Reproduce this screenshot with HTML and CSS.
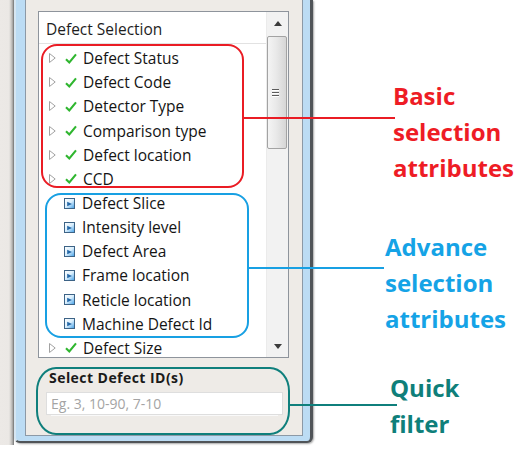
FILE: index.html
```html
<!DOCTYPE html>
<html>
<head>
<meta charset="utf-8">
<link rel="stylesheet" href="styles.css">
</head>
<body>
<div class="stage">
  <div class="backdrop"></div>
  <div class="window">
    <div class="client">
      <div class="tree">
        <div class="list">
          <div class="header">Defect Selection</div>
          <div class="rows">
            <div class="row"><svg class="exp" viewBox="0 0 7 10"><polygon points="0.5,0.5 6.2,5 0.5,9.5"/></svg><svg class="check" viewBox="0 0 12 11"><path d="M1 6.2 L4.3 9.4 L11 1.3"/></svg><span class="label">Defect Status</span></div>
            <div class="row"><svg class="exp" viewBox="0 0 7 10"><polygon points="0.5,0.5 6.2,5 0.5,9.5"/></svg><svg class="check" viewBox="0 0 12 11"><path d="M1 6.2 L4.3 9.4 L11 1.3"/></svg><span class="label">Defect Code</span></div>
            <div class="row"><svg class="exp" viewBox="0 0 7 10"><polygon points="0.5,0.5 6.2,5 0.5,9.5"/></svg><svg class="check" viewBox="0 0 12 11"><path d="M1 6.2 L4.3 9.4 L11 1.3"/></svg><span class="label">Detector Type</span></div>
            <div class="row"><svg class="exp" viewBox="0 0 7 10"><polygon points="0.5,0.5 6.2,5 0.5,9.5"/></svg><svg class="check" viewBox="0 0 12 11"><path d="M1 6.2 L4.3 9.4 L11 1.3"/></svg><span class="label">Comparison type</span></div>
            <div class="row"><svg class="exp" viewBox="0 0 7 10"><polygon points="0.5,0.5 6.2,5 0.5,9.5"/></svg><svg class="check" viewBox="0 0 12 11"><path d="M1 6.2 L4.3 9.4 L11 1.3"/></svg><span class="label">Defect location</span></div>
            <div class="row"><svg class="exp" viewBox="0 0 7 10"><polygon points="0.5,0.5 6.2,5 0.5,9.5"/></svg><svg class="check" viewBox="0 0 12 11"><path d="M1 6.2 L4.3 9.4 L11 1.3"/></svg><span class="label">CCD</span></div>
            <div class="row"><span class="exp"></span><svg class="adv" viewBox="0 0 11 11"><defs><linearGradient id="g" x1="0" y1="0" x2="1" y2="1"><stop offset="0" stop-color="#ffffff"/><stop offset="0.5" stop-color="#d9eefc"/><stop offset="1" stop-color="#3b9be6"/></linearGradient></defs><rect x="0.5" y="0.5" width="10" height="10" fill="url(#g)" stroke="#3d6386"/><path d="M3.2 3.8 L8 6 L3.2 8.2 Z" fill="#2468a8"/></svg><span class="label">Defect Slice</span></div>
            <div class="row"><span class="exp"></span><svg class="adv" viewBox="0 0 11 11"><rect x="0.5" y="0.5" width="10" height="10" fill="url(#g)" stroke="#3d6386"/><path d="M3.2 3.8 L8 6 L3.2 8.2 Z" fill="#2468a8"/></svg><span class="label">Intensity level</span></div>
            <div class="row"><span class="exp"></span><svg class="adv" viewBox="0 0 11 11"><rect x="0.5" y="0.5" width="10" height="10" fill="url(#g)" stroke="#3d6386"/><path d="M3.2 3.8 L8 6 L3.2 8.2 Z" fill="#2468a8"/></svg><span class="label">Defect Area</span></div>
            <div class="row"><span class="exp"></span><svg class="adv" viewBox="0 0 11 11"><rect x="0.5" y="0.5" width="10" height="10" fill="url(#g)" stroke="#3d6386"/><path d="M3.2 3.8 L8 6 L3.2 8.2 Z" fill="#2468a8"/></svg><span class="label">Frame location</span></div>
            <div class="row"><span class="exp"></span><svg class="adv" viewBox="0 0 11 11"><rect x="0.5" y="0.5" width="10" height="10" fill="url(#g)" stroke="#3d6386"/><path d="M3.2 3.8 L8 6 L3.2 8.2 Z" fill="#2468a8"/></svg><span class="label">Reticle location</span></div>
            <div class="row"><span class="exp"></span><svg class="adv" viewBox="0 0 11 11"><rect x="0.5" y="0.5" width="10" height="10" fill="url(#g)" stroke="#3d6386"/><path d="M3.2 3.8 L8 6 L3.2 8.2 Z" fill="#2468a8"/></svg><span class="label">Machine Defect Id</span></div>
            <div class="row"><svg class="exp" viewBox="0 0 7 10"><polygon points="0.5,0.5 6.2,5 0.5,9.5"/></svg><svg class="check" viewBox="0 0 12 11"><path d="M1 6.2 L4.3 9.4 L11 1.3"/></svg><span class="label">Defect Size</span></div>
          </div>
        </div>
        <div class="scrollbar">
          <div class="sb-btn"><svg class="arrow" viewBox="0 0 8 5"><polygon points="0,5 4,0 8,5"/></svg></div>
          <div class="sb-track">
            <div class="thumb"><span class="grip"></span><span class="grip"></span><span class="grip"></span></div>
          </div>
          <div class="sb-btn"><svg class="arrow" viewBox="0 0 8 5"><polygon points="0,0 8,0 4,5"/></svg></div>
        </div>
      </div>
      <div class="quick">
        <div class="quick-label">Select Defect ID(s)</div>
        <div class="quick-input">Eg. 3, 10-90, 7-10</div>
      </div>
    </div>
  </div>

  <div class="callout red box-basic"></div>
  <div class="leader red-line line-basic"></div>
  <div class="note note-basic">Basic<br>selection<br>attributes</div>

  <div class="callout blue box-adv"></div>
  <div class="leader blue-line line-adv"></div>
  <div class="note note-adv">Advance<br>selection<br>attributes</div>

  <div class="callout teal box-quick"></div>
  <div class="leader teal-line line-quick"></div>
  <div class="note note-quick">Quick<br>filter</div>
</div>
</body>
</html>
```
FILE: styles.css
```css
html, body {
  margin: 0;
  padding: 0;
  background: #ffffff;
}

.stage {
  position: relative;
  width: 531px;
  height: 453px;
  overflow: hidden;
  display: flex;
  align-items: flex-start;
  font-family: "Open Sans", "Noto Sans", sans-serif;
}

.backdrop {
  width: 14px;
  height: 445px;
  flex: none;
  background: linear-gradient(to right, #ece9e6 0, #ebe8e5 9px, #cfcdca 11px, #9d9d9d 13px, #6f6f6f 14px);
}

.window {
  box-sizing: border-box;
  flex: none;
  width: 299px;
  height: 443px;
  background: #bcdcf4;
  border-left: 2px solid #d6e6f2;
  border-right: 3px solid #505458;
  border-bottom: 2px solid #505458;
  border-radius: 0 0 6px 6px;
  padding: 0 7px 5px 9px;
  box-shadow: 1px 1px 2px rgba(0,0,0,0.35);
}

.client {
  box-sizing: border-box;
  height: 100%;
  background: #eeebe7;
  border: 1px solid #8c99a6;
  border-top: 0;
  display: flex;
  flex-direction: column;
}

.tree {
  box-sizing: border-box;
  width: 251px;
  height: 347px;
  margin: 11px 0 0 12px;
  border: 1px solid #8e949c;
  background: #ffffff;
  display: flex;
  overflow: hidden;
}

.list {
  flex: 1;
  min-width: 0;
}

.header {
  height: 28px;
  line-height: 28px;
  padding-top: 3px;
  border-bottom: 1px solid #e2e2e2;
  padding-left: 7px;
  font-size: 15.5px;
  color: #1e1e1e;
}

.rows {
  padding-top: 2px;
}

.row {
  height: 24.17px;
  display: flex;
  align-items: center;
  font-size: 15.5px;
  color: #141414;
  white-space: nowrap;
}

.exp {
  flex: none;
  width: 7px;
  height: 10px;
  margin-left: 10px;
}
.exp polygon {
  fill: #ffffff;
  stroke: #a2a2a2;
  stroke-width: 1;
}

.check {
  flex: none;
  width: 12px;
  height: 11px;
  margin-left: 9px;
}
.check path {
  fill: none;
  stroke: #2fb62f;
  stroke-width: 2.1;
}

.adv {
  flex: none;
  width: 11px;
  height: 11px;
  margin-left: 8px;
  margin-right: 1px;
}

.label {
  margin-left: 6px;
}

.scrollbar {
  flex: none;
  width: 22px;
  display: flex;
  flex-direction: column;
  background: #f2f2f2;
  border-left: 1px solid #ebebeb;
  box-sizing: border-box;
}

.sb-btn {
  height: 22px;
  flex: none;
  display: flex;
  align-items: center;
  justify-content: center;
}

.arrow {
  width: 8px;
  height: 5px;
}
.arrow polygon {
  fill: #3c3c3c;
}

.sb-track {
  flex: 1;
  padding-top: 2px;
}

.thumb {
  box-sizing: border-box;
  height: 113px;
  margin: 0 1px 0 0;
  border: 1px solid #a3a3a3;
  border-radius: 2px;
  background: linear-gradient(to right, #f4f4f4 0, #e9e9e9 45%, #d6d6d6 100%);
  display: flex;
  flex-direction: column;
  justify-content: center;
  align-items: center;
  gap: 2px;
}

.grip {
  width: 7px;
  height: 1px;
  background: #5b5b5b;
  box-shadow: 0 1px 0 #ffffff;
  margin-left: -4px;
}

.quick {
  margin: 11px 0 0 20px;
}

.quick-label {
  padding-left: 3px;
  font-weight: 700;
  font-size: 14px;
  letter-spacing: 0.45px;
  line-height: 18px;
  color: #1a1a1a;
}

.quick-input {
  box-sizing: border-box;
  width: 237px;
  height: 23px;
  margin-top: 5px;
  background: #ffffff;
  border: 1px solid #dedede;
  padding-left: 4px;
  font-size: 14px;
  line-height: 21px;
  color: #a4a4a4;
  box-shadow: 0 6px 0 -5px #f9f9f9;
}

/* annotation layer */
.callout {
  position: absolute;
  box-sizing: border-box;
}
.red { border: 2.4px solid #ea1c24; }
.blue { border: 2.4px solid #18a0e3; }
.teal { border: 2.6px solid #0f7f7c; }

.box-basic {
  left: 41px;
  top: 44px;
  width: 203px;
  height: 144px;
  border-radius: 16px;
}

.box-adv {
  left: 45px;
  top: 193px;
  width: 204px;
  height: 145px;
  border-radius: 16px;
}

.box-quick {
  left: 36px;
  top: 367px;
  width: 254px;
  height: 68px;
  border-radius: 20px / 24px;
}

.leader {
  position: absolute;
  height: 2px;
}
.red-line { background: #ea1c24; }
.blue-line { background: #18a0e3; }
.teal-line { background: #0f7f7c; }

.line-basic { left: 243px; top: 117px; width: 152px; }
.line-adv { left: 248px; top: 267px; width: 136px; }
.line-quick { left: 289px; top: 404px; width: 108px; }

.note {
  position: absolute;
  font-family: "Open Sans", "Noto Sans", sans-serif;
  font-weight: 700;
  font-size: 24px;
  line-height: 36px;
  white-space: nowrap;
}
.note-basic { left: 393px; top: 78px; color: #ee1c25; }
.note-adv { left: 385px; top: 229px; color: #15a3e6; }
.note-quick { left: 390px; top: 370px; color: #0f7f7a; }
```
